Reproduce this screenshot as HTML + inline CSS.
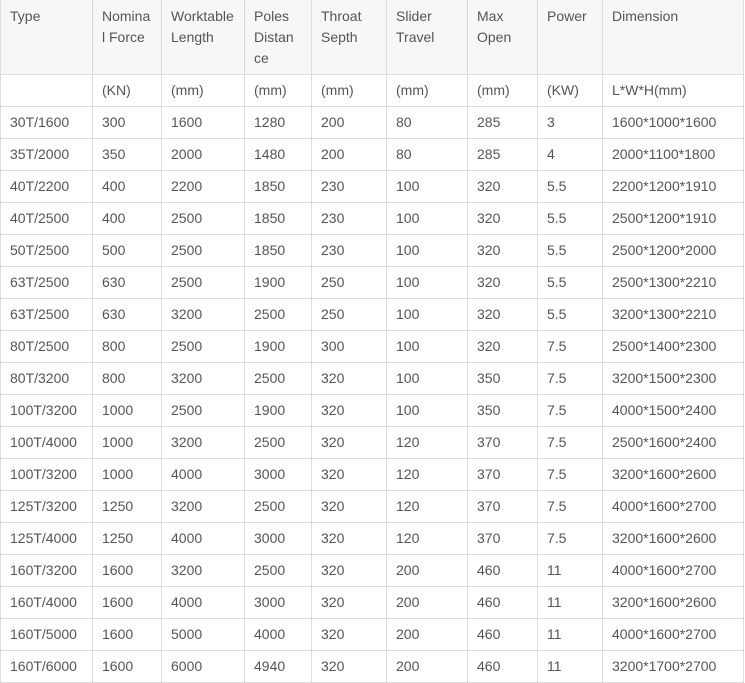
<!DOCTYPE html>
<html><head><meta charset="utf-8"><style>
html,body{margin:0;padding:0;background:#fff;width:745px;height:679px;overflow:hidden}
table{border-collapse:collapse;table-layout:fixed;font-family:"Liberation Sans",Arial,sans-serif;font-size:14px;color:#555;position:absolute;left:0;top:-1px}
td{border:1px solid #dcdcdc;padding:0 0 0 9px;height:31px;vertical-align:middle;white-space:nowrap;line-height:21px}
tr.h td{height:75px;vertical-align:top;padding-top:6px;white-space:normal;background:#f7f7f7;box-sizing:border-box}
</style></head><body>
<table>
<colgroup><col style="width:92px"><col style="width:69px"><col style="width:83px"><col style="width:67px"><col style="width:75px"><col style="width:81px"><col style="width:70px"><col style="width:65px"><col style="width:141px"></colgroup>
<tr class="h"><td>Type</td><td>Nomina<br>l Force</td><td>Worktable<br>Length</td><td>Poles<br>Distan<br>ce</td><td>Throat<br>Septh</td><td>Slider<br>Travel</td><td>Max<br>Open</td><td>Power</td><td>Dimension</td></tr>
<tr><td></td><td>(KN)</td><td>(mm)</td><td>(mm)</td><td>(mm)</td><td>(mm)</td><td>(mm)</td><td>(KW)</td><td>L*W*H(mm)</td></tr>
<tr><td>30T/1600</td><td>300</td><td>1600</td><td>1280</td><td>200</td><td>80</td><td>285</td><td>3</td><td>1600*1000*1600</td></tr>
<tr><td>35T/2000</td><td>350</td><td>2000</td><td>1480</td><td>200</td><td>80</td><td>285</td><td>4</td><td>2000*1100*1800</td></tr>
<tr><td>40T/2200</td><td>400</td><td>2200</td><td>1850</td><td>230</td><td>100</td><td>320</td><td>5.5</td><td>2200*1200*1910</td></tr>
<tr><td>40T/2500</td><td>400</td><td>2500</td><td>1850</td><td>230</td><td>100</td><td>320</td><td>5.5</td><td>2500*1200*1910</td></tr>
<tr><td>50T/2500</td><td>500</td><td>2500</td><td>1850</td><td>230</td><td>100</td><td>320</td><td>5.5</td><td>2500*1200*2000</td></tr>
<tr><td>63T/2500</td><td>630</td><td>2500</td><td>1900</td><td>250</td><td>100</td><td>320</td><td>5.5</td><td>2500*1300*2210</td></tr>
<tr><td>63T/2500</td><td>630</td><td>3200</td><td>2500</td><td>250</td><td>100</td><td>320</td><td>5.5</td><td>3200*1300*2210</td></tr>
<tr><td>80T/2500</td><td>800</td><td>2500</td><td>1900</td><td>300</td><td>100</td><td>320</td><td>7.5</td><td>2500*1400*2300</td></tr>
<tr><td>80T/3200</td><td>800</td><td>3200</td><td>2500</td><td>320</td><td>100</td><td>350</td><td>7.5</td><td>3200*1500*2300</td></tr>
<tr><td>100T/3200</td><td>1000</td><td>2500</td><td>1900</td><td>320</td><td>100</td><td>350</td><td>7.5</td><td>4000*1500*2400</td></tr>
<tr><td>100T/4000</td><td>1000</td><td>3200</td><td>2500</td><td>320</td><td>120</td><td>370</td><td>7.5</td><td>2500*1600*2400</td></tr>
<tr><td>100T/3200</td><td>1000</td><td>4000</td><td>3000</td><td>320</td><td>120</td><td>370</td><td>7.5</td><td>3200*1600*2600</td></tr>
<tr><td>125T/3200</td><td>1250</td><td>3200</td><td>2500</td><td>320</td><td>120</td><td>370</td><td>7.5</td><td>4000*1600*2700</td></tr>
<tr><td>125T/4000</td><td>1250</td><td>4000</td><td>3000</td><td>320</td><td>120</td><td>370</td><td>7.5</td><td>3200*1600*2600</td></tr>
<tr><td>160T/3200</td><td>1600</td><td>3200</td><td>2500</td><td>320</td><td>200</td><td>460</td><td>11</td><td>4000*1600*2700</td></tr>
<tr><td>160T/4000</td><td>1600</td><td>4000</td><td>3000</td><td>320</td><td>200</td><td>460</td><td>11</td><td>3200*1600*2600</td></tr>
<tr><td>160T/5000</td><td>1600</td><td>5000</td><td>4000</td><td>320</td><td>200</td><td>460</td><td>11</td><td>4000*1600*2700</td></tr>
<tr><td>160T/6000</td><td>1600</td><td>6000</td><td>4940</td><td>320</td><td>200</td><td>460</td><td>11</td><td>3200*1700*2700</td></tr>
</table>
</body></html>
